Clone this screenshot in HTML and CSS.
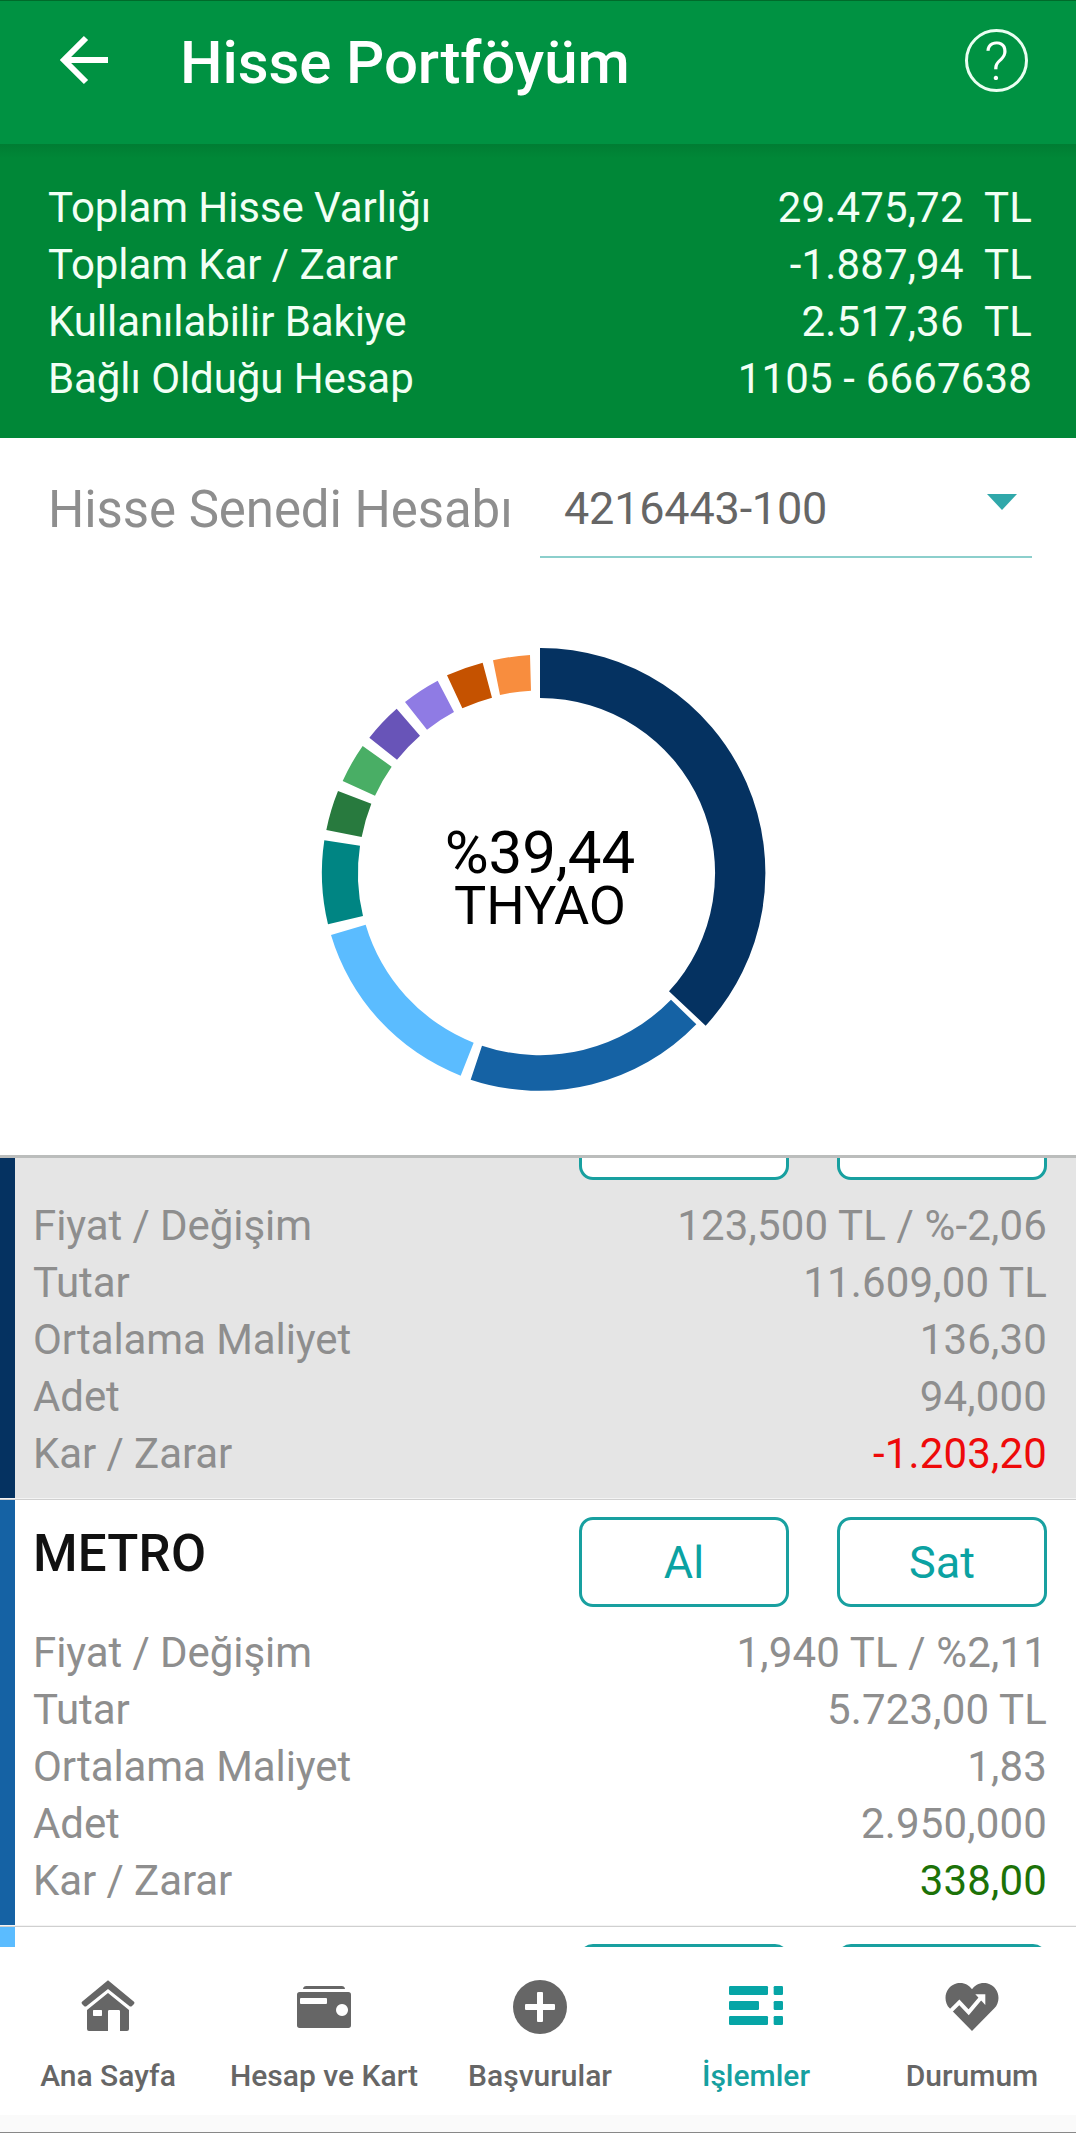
FILE: index.html
```html
<!DOCTYPE html>
<html lang="tr">
<head>
	<meta charset="utf-8">
	<title>Hisse Portföyüm</title>
	<link rel="stylesheet" href="styles.css">
</head>
<body>
	<div id="window">
		<div id="header">
			<svg class="back" viewBox="0 0 50 50"><path d="M48 25H5M26 3L4 25L26 47" fill="none" stroke="#fff" stroke-width="6"/></svg>
			<h1>Hisse Portföyüm</h1>
			<div class="help">?</div>
		</div>
		<div id="summary">
			<div class="line"><span>Toplam Hisse Varlığı</span><span>29.475,72&nbsp; TL</span></div>
			<div class="line"><span>Toplam Kar / Zarar</span><span>-1.887,94&nbsp; TL</span></div>
			<div class="line"><span>Kullanılabilir Bakiye</span><span>2.517,36&nbsp; TL</span></div>
			<div class="line"><span>Bağlı Olduğu Hesap</span><span>1105 - 6667638</span></div>
		</div>
		<div id="account">
			<label>Hisse Senedi Hesabı</label>
			<div class="select"><span>4216443-100</span><i class="caret"></i></div>
		</div>
		<div id="chart">
			<svg viewBox="0 0 1440 1440">
				<path fill="#053261" d="M720 54A675 675 0 0 1 1217 1187L1107 1084A525 525 0 0 0 720 204Z"/>
				<path fill="#1562a4" d="M1189 1183A654 654 0 0 1 512 1349L546 1247A546 546 0 0 0 1113 1109Z"/>
				<path fill="#5bbcff" d="M482 1337A654 654 0 0 1 93 915L197 884A546 546 0 0 0 521 1238Z"/>
				<path fill="#008583" d="M84 883A654 654 0 0 1 73 631L180 647A546 546 0 0 0 189 858Z"/>
				<path fill="#287a3e" d="M79 600A654 654 0 0 1 114 483L214 521A546 546 0 0 0 185 621Z"/>
				<path fill="#49ae65" d="M128 453A654 654 0 0 1 188 348L275 410A546 546 0 0 0 225 497Z"/>
				<path fill="#6854b8" d="M208 323A654 654 0 0 1 290 236L360 317A546 546 0 0 0 291 389Z"/>
				<path fill="#8f7be4" d="M315 216A654 654 0 0 1 413 152L462 246A546 546 0 0 0 381 299Z"/>
				<path fill="#c55200" d="M441 136A654 654 0 0 1 548 98L576 203A546 546 0 0 0 487 235Z"/>
				<path fill="#f88d3e" d="M579 91A654 654 0 0 1 690 75L693 182A546 546 0 0 0 600 195Z"/>
				<text class="percent" x="720" y="729">%39,44</text>
				<text class="symbol" x="720" y="882">THYAO</text>
			</svg>
		</div>
		<div id="list">
			<div class="stock selected navy">
				<div class="top"><button></button><button></button></div>
				<div class="line"><span>Fiyat / Değişim</span><span>123,500 TL / %-2,06</span></div>
				<div class="line"><span>Tutar</span><span>11.609,00 TL</span></div>
				<div class="line"><span>Ortalama Maliyet</span><span>136,30</span></div>
				<div class="line"><span>Adet</span><span>94,000</span></div>
				<div class="line"><span>Kar / Zarar</span><span class="loss">-1.203,20</span></div>
			</div>
			<div class="stock blue">
				<div class="top"><h2>METRO</h2><button>Al</button><button>Sat</button></div>
				<div class="line"><span>Fiyat / Değişim</span><span>1,940 TL / %2,11</span></div>
				<div class="line"><span>Tutar</span><span>5.723,00 TL</span></div>
				<div class="line"><span>Ortalama Maliyet</span><span>1,83</span></div>
				<div class="line"><span>Adet</span><span>2.950,000</span></div>
				<div class="line"><span>Kar / Zarar</span><span class="profit">338,00</span></div>
			</div>
			<div class="stock sky">
				<div class="top"><button></button><button></button></div>
			</div>
		</div>
		<div id="nav">
			<a>
				<svg viewBox="0 0 162 162"><path d="M81 1L3 65q-3 3 0 7l6 6q4 3 8 0L81 27l64 51q4 3 8 0l6-6q3-4 0-7z"/><path fill-rule="evenodd" d="M81 39l63 51v57q0 6-6 6h-21V94q0-4-4-4H85q-4 0-4 4v59H24q-6 0-6-6V90zM36 92v14q0 2 2 2h23q2 0 2-2V92q0-2-2-2H38q-2 0-2 2z"/></svg>
				Ana Sayfa
			</a>
			<a>
				<svg viewBox="0 0 162 162"><path d="M18 27q1-9 10-9h106q9 0 10 9z"/><path fill-rule="evenodd" d="M8 36h146q8 0 8 8v92q0 8-8 8H8q-8 0-8-8V44q0-8 8-8zm4 18q-3 0-3 3v12q0 3 3 3h75q3 0 3-3V57q0-3-3-3zM135 72a18 18 0 1 0 .1 0z"/></svg>
				Hesap ve Kart
			</a>
			<a>
				<svg viewBox="0 0 162 162"><circle cx="81" cy="81" r="81"/><path fill="#fff" d="M75 36h12q3 0 3 3v33h33q3 0 3 3v12q0 3-3 3H90v33q0 3-3 3H75q-3 0-3-3V90H39q-3 0-3-3V75q0-3 3-3h33V39q0-3 3-3z"/></svg>
				Başvurular
			</a>
			<a class="active">
				<svg viewBox="0 0 162 162"><rect y="18" width="117" height="27" rx="4"/><rect y="63" width="90" height="27" rx="4"/><rect y="108" width="117" height="27" rx="4"/><rect x="134" y="18" width="28" height="27" rx="4"/><rect x="134" y="63" width="28" height="27" rx="4"/><rect x="134" y="108" width="28" height="27" rx="4"/></svg>
				İşlemler
			</a>
			<a>
				<svg viewBox="0 0 162 162"><path d="M81 153L14 85C-8 62-1 20 36 10c20-4 36 5 45 18C90 15 106 6 126 10c37 10 44 52 22 75z"/><path d="M18 92L43 67l28 30 36-43" fill="none" stroke="#fff" stroke-width="12"/><path fill="#fff" d="M91 43h30v32z"/></svg>
				Durumum
			</a>
		</div>
	</div>
</body>
</html>
```

FILE: styles.css
```css
*
{
	font-family: Roboto, "Liberation Sans", sans-serif;
	box-sizing: border-box;
	margin: 0px;
	padding: 0px;
}
body
{
	background: #fff;
	overflow: hidden;
}
h1
{
	font-size: 60px;
	font-weight: 500;
	line-height: 70px;
	letter-spacing: -0.1px;
	margin-left: -1px;
	padding-top: 1px;
	flex: 1;
}
h2
{
	font-size: 51px;
	font-weight: 500;
	line-height: 60px;
	letter-spacing: 0.2px;
	color: #111;
	margin: -16px auto 0px 0px;
}
button
{
	width: 210px;
	height: 90px;
	padding-top: 1px;
	border: 3px solid #18a0a0;
	border-radius: 14px;
	background: #fff;
	color: #0ba2a2;
	font-size: 45px;
}
#window
{
	display: flex;
	flex-direction: column;
	width: 1076px;
	height: 2133px;
	border-bottom: 1px solid #888;
	background: #fafafa;
	overflow: hidden;
}
#header
{
	display: flex;
	align-items: flex-start;
	height: 144px;
	padding: 26px 48px 0px 60px;
	border-top: 1px solid #006a2a;
	background: #009242;
	color: #fff;
}
.back
{
	width: 50px;
	height: 50px;
	margin: 8px 71px 0px 0px;
}
.help
{
	width: 63px;
	height: 63px;
	margin-top: 2px;
	border: 3px solid #eafff2;
	border-radius: 50%;
	font-size: 54px;
	font-weight: 300;
	line-height: 59px;
	text-align: center;
}
#summary
{
	height: 294px;
	padding: 35px 44px 0px 48px;
	background: linear-gradient(#007d33, #008737 14px);
	color: #f2fff5;
}
.line
{
	display: flex;
	justify-content: space-between;
	height: 57px;
	font-size: 42px;
	line-height: 57px;
	white-space: pre;
}
.line span:first-child
{
	letter-spacing: -0.08px;
}
.line span:last-child
{
	letter-spacing: 0.16px;
}
#account
{
	display: flex;
	height: 122px;
	padding: 0px 44px 0px 48px;
	background: #fff;
}
#account label
{
	width: 492px;
	padding-top: 42px;
	font-size: 51px;
	line-height: 60px;
	letter-spacing: -0.08px;
	color: #8e8e8e;
}
.select
{
	display: flex;
	flex: 1;
	justify-content: space-between;
	height: 120px;
	padding: 42px 15px 0px 24px;
	border-bottom: 2px solid #8ccfcc;
	font-size: 45px;
	line-height: 58px;
	letter-spacing: -0.2px;
	color: #666;
}
.caret
{
	width: 30px;
	height: 16px;
	margin-top: 14px;
	background: #30a8aa;
	clip-path: polygon(0 0, 100% 0, 50% 100%);
}
#chart
{
	height: 598px;
	padding: 70px 298px 0px 300px;
	border-bottom: 3px solid #bbbdbc;
	background: #fff;
}
#chart svg
{
	display: block;
	width: 480px;
	height: 480px;
}
.percent
{
	font-size: 180px;
	text-anchor: middle;
}
.symbol
{
	font-size: 162px;
	text-anchor: middle;
}
#list
{
	height: 789px;
	overflow: hidden;
	background: #fff;
}
.stock
{
	height: 425px;
	margin-bottom: 2px;
	padding: 17px 29px 0px 18px;
	border-left: 15px solid;
	background: #fff;
	color: #8e8e8e;
	box-shadow: 0px 1px 0px #f4f4f4, 0px 2px 0px #d0d0d0;
}
.stock:first-child
{
	margin-top: -85px;
}
.selected
{
	background: #e5e5e5;
}
.navy
{
	border-left-color: #053261;
}
.blue
{
	border-left-color: #1562a4;
}
.sky
{
	border-left-color: #5bbcff;
}
.top
{
	display: flex;
	justify-content: flex-end;
	align-items: center;
	gap: 48px;
	height: 90px;
	margin-bottom: 17px;
}
.loss
{
	color: #ee0a0a;
}
.profit
{
	color: #1c7208;
}
/* five 216px tabs, the last one runs 4px past the right edge */
#nav
{
	display: flex;
	width: 1080px;
	height: 168px;
	background: #fff;
}
#nav a
{
	display: flex;
	flex: 1;
	flex-direction: column;
	align-items: center;
	gap: 24px;
	padding-top: 33px;
	font-size: 30px;
	font-weight: 500;
	line-height: 36px;
	color: #666;
	white-space: nowrap;
}
#nav .active
{
	color: #16a0a0;
}
#nav svg
{
	width: 54px;
	height: 54px;
	fill: #666;
}
#nav .active svg
{
	fill: #06a5a6;
}
```
